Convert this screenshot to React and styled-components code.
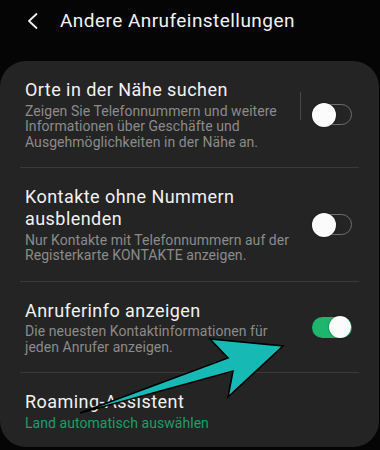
import React from 'react';
import styled, { createGlobalStyle } from 'styled-components';

const GlobalStyle = createGlobalStyle`
  html, body {
    margin: 0;
    padding: 0;
    background: #050505;
  }
  body {
    font-family: Roboto, "Noto Sans", "Liberation Sans", sans-serif;
    -webkit-font-smoothing: antialiased;
  }
`;

const rows = [
  {
    title: 'Orte in der Nähe suchen',
    sub: 'Zeigen Sie Telefonnummern und weitere Informationen über Geschäfte und Ausgehmöglichkeiten in der Nähe an.',
    toggle: 'off',
    separator: true,
  },
  {
    title: 'Kontakte ohne Nummern ausblenden',
    sub: 'Nur Kontakte mit Telefonnummern auf der Registerkarte KONTAKTE anzeigen.',
    toggle: 'off',
  },
  {
    title: 'Anruferinfo anzeigen',
    sub: 'Die neuesten Kontaktinformationen für jeden Anrufer anzeigen.',
    toggle: 'on',
  },
  {
    title: 'Roaming-Assistent',
    sub: 'Land automatisch auswählen',
    accent: true,
  },
];

const App = () => {
  return (
    <Page>
      <GlobalStyle />
      <Header>
        <BackButton>
          <svg width="12" height="18" viewBox="0 0 12 18">
            <polyline points="9.5,2 2,9 9.5,16" fill="none" stroke="#f2f2f2" strokeWidth="1.8" strokeLinecap="round" strokeLinejoin="round" />
          </svg>
        </BackButton>
        <HeaderTitle>Andere Anrufeinstellungen</HeaderTitle>
      </Header>

      <Card>
        {rows.map((row, i) => (
          <Row key={row.title} last={i === rows.length - 1}>
            <TextCol>
              <Title>{row.title}</Title>
              <Sub accent={row.accent}>{row.sub}</Sub>
            </TextCol>
            {row.toggle && (
              <ToggleArea>
                {row.separator && <VSeparator />}
                <Switch on={row.toggle === 'on'}>
                  <Knob on={row.toggle === 'on'} />
                </Switch>
              </ToggleArea>
            )}
          </Row>
        ))}
      </Card>

      <Annotation width="380" height="450" viewBox="0 0 380 450">
        <polygon
          points="80,413 228,358 210,339 283,346 228,397 233,371"
          fill="#17b9b4"
          stroke="#000"
          strokeWidth="1.6"
          strokeLinejoin="miter"
        />
      </Annotation>
    </Page>
  );
};

export default App;

const Page = styled.div`
  position: relative;
  width: 380px;
  height: 450px;
  overflow: hidden;
  background: #050505;
`;

const Header = styled.div`
  display: flex;
  align-items: center;
  height: 40px;
  padding: 1px 0 0 27px;
  box-sizing: border-box;
`;

const BackButton = styled.div`
  display: flex;
  align-items: center;
  width: 33px;
  margin-top: 1px;
`;

const HeaderTitle = styled.div`
  color: #f2f2f2;
  font-size: 19px;
  line-height: 24px;
  letter-spacing: 0.45px;
`;

const Card = styled.div`
  margin: 21px 1px 0 0;
  background: #242424;
  border-radius: 26px;
  padding: 0 20px;
`;

const Row = styled.div`
  display: flex;
  align-items: center;
  padding: 18px 7px ${({ last }) => (last ? '16px' : '17px')} 5px;
  border-bottom: ${({ last }) => (last ? 'none' : '1px solid #3a3a3a')};
`;

const TextCol = styled.div`
  flex: 1;
  min-width: 0;
  padding-right: 18px;
`;

const Title = styled.div`
  color: #f2f2f2;
  font-size: 18px;
  line-height: 22px;
  letter-spacing: 0.45px;
`;

const Sub = styled.div`
  margin-top: 2.5px;
  color: ${({ accent }) => (accent ? '#1c9f68' : '#8b8b8b')};
  font-size: 14px;
  line-height: 15.5px;
  letter-spacing: 0.05px;
`;

const ToggleArea = styled.div`
  display: flex;
  align-items: center;
  position: relative;
  width: 40px;
  flex-shrink: 0;
`;

const VSeparator = styled.div`
  position: absolute;
  left: -12px;
  top: -12px;
  width: 1px;
  height: 28px;
  background: #4a4a4a;
`;

const Switch = styled.div`
  position: relative;
  width: 40px;
  height: 21px;
  box-sizing: border-box;
  border-radius: 11px;
  border: ${({ on }) => (on ? 'none' : '1.5px solid #6e6e6e')};
  background: ${({ on }) => (on ? '#1db66c' : 'transparent')};
`;

const Knob = styled.div`
  position: absolute;
  top: 50%;
  width: ${({ on }) => (on ? '22px' : '24px')};
  height: ${({ on }) => (on ? '22px' : '24px')};
  margin-top: ${({ on }) => (on ? '-11px' : '-12px')};
  left: ${({ on }) => (on ? '17px' : '-1.5px')};
  border-radius: 50%;
  background: #fbfbfb;
  box-shadow: 0 0 2px rgba(0, 0, 0, 0.5);
`;

const Annotation = styled.svg`
  position: absolute;
  left: 0;
  top: 0;
  pointer-events: none;
`;
